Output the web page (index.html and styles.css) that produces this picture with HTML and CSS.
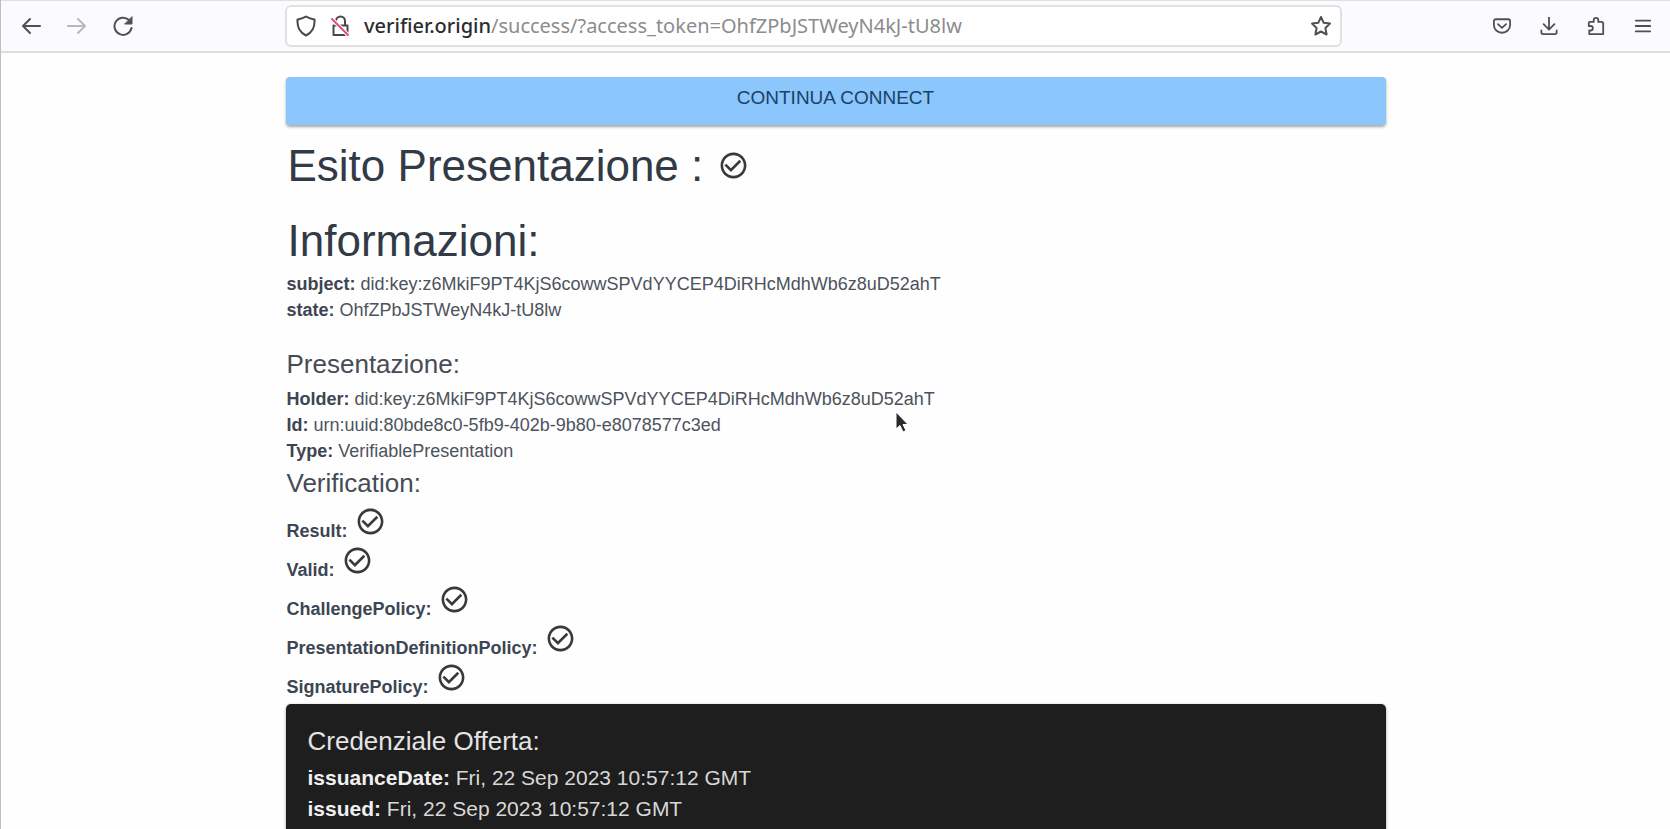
FILE: index.html
```html
<!DOCTYPE html>
<html lang="it">
<head>
<meta charset="utf-8">
<title>Esito Presentazione</title>
<link rel="stylesheet" href="styles.css">
</head>
<body>
<svg class="defs" aria-hidden="true">
  <symbol id="check" viewBox="0 0 24 24"><path fill="currentColor" d="M16.59 7.58 10 14.17l-3.59-3.58L5 12l5 5 8-8zM12 2C6.48 2 2 6.48 2 12s4.48 10 10 10 10-4.48 10-10S17.52 2 12 2zm0 18c-4.42 0-8-3.58-8-8s3.58-8 8-8 8 3.58 8 8-3.58 8-8 8z"/></symbol>
</svg>
<header class="toolbar">
  <nav class="nav">
    <button class="tool" aria-label="Indietro"><svg viewBox="0 0 20 20"><path d="M19 10H2M9 3 2 10l7 7"/></svg></button>
    <button class="tool faded" aria-label="Avanti"><svg viewBox="0 0 20 20"><path d="M1 10h17M11 3l7 7-7 7"/></svg></button>
    <button class="tool" aria-label="Ricarica"><svg viewBox="0 0 20 20"><path d="M18.500 12A8.600 8.600 0 1 1 16 4"/><path class="solid" d="M19 1v7h-7z"/></svg></button>
  </nav>
  <div class="urlbar">
    <svg class="mark" viewBox="0 0 20 22"><path d="M10 1.500C7 3.500 4 4 1.500 4.500 1 12 3.500 17.500 10 20.500 16.500 17.500 19 12 18.500 4.500 16 4 13 3.500 10 1.500z"/></svg>
    <svg class="mark" viewBox="0 0 20 22"><path d="M6 10V6a4.500 4.500 0 0 1 9 0v4M3.500 10.500h14v9.500h-14z"/><path class="halo" d="M3 5l15 15"/><path class="slash" d="M2 4l16 16"/></svg>
    <div class="url" role="textbox" aria-label="Indirizzo"><span class="host">verifier.origin</span>/success/?access_token=OhfZPbJSTWeyN4kJ-tU8lw</div>
    <button class="tool" aria-label="Aggiungi ai segnalibri"><svg class="star" viewBox="0 0 22 22"><path d="M11 2l2.700 5.800 6.300.800-4.600 4.400 1.200 6.500L11 16.500l-5.600 3 1.200-6.500L2 8.600l6.300-.800z"/></svg></button>
  </div>
  <div class="actions">
    <button class="tool" aria-label="Pocket"><svg viewBox="0 0 20 20"><path d="M3 2.500h14a2 2 0 0 1 2 2V9a9 8.500 0 0 1-18 0V4.500a2 2 0 0 1 2-2zM5.500 8l4.500 4 4.500-4"/></svg></button>
    <button class="tool" aria-label="Download"><svg viewBox="0 0 20 20"><path d="M10 0v13M4 8l6 6 6-6M1.500 15v2a2 2 0 0 0 2 2h13a2 2 0 0 0 2-2v-2"/></svg></button>
    <button class="tool" aria-label="Estensioni"><svg viewBox="0 0 20 20"><path d="M3 5.500h4.500V3.500a2.500 2.500 0 0 1 5 0v2H16a2 2 0 0 1 2 2V19H2.500v-4H4a2.500 2.500 0 0 0 0-5H2V7a1.500 1.500 0 0 1 1-1.500z"/></svg></button>
    <button class="tool" aria-label="Menu"><svg viewBox="0 0 20 20"><path d="M2 4h16M2 10h16M2 16h16"/></svg></button>
  </div>
</header>
<main class="page">
  <button class="connect">CONTINUA CONNECT</button>
  <h1 class="title">Esito Presentazione : <svg class="check"><use href="#check"/></svg></h1>
  <h1 class="title">Informazioni:</h1>
  <p class="line"><b>subject:</b> did:key:z6MkiF9PT4KjS6cowwSPVdYYCEP4DiRHcMdhWb6z8uD52ahT</p>
  <p class="line"><b>state:</b> OhfZPbJSTWeyN4kJ-tU8lw</p>
  <h2 class="subtitle spaced">Presentazione:</h2>
  <p class="line"><b>Holder:</b> did:key:z6MkiF9PT4KjS6cowwSPVdYYCEP4DiRHcMdhWb6z8uD52ahT</p>
  <p class="line"><b>Id:</b> urn:uuid:80bde8c0-5fb9-402b-9b80-e8078577c3ed</p>
  <p class="line"><b>Type:</b> VerifiablePresentation</p>
  <h2 class="subtitle">Verification:</h2>
  <div class="results">
    <p class="line result"><b>Result:</b> <svg class="check"><use href="#check"/></svg></p>
    <p class="line result"><b>Valid:</b> <svg class="check"><use href="#check"/></svg></p>
    <p class="line result"><b>ChallengePolicy:</b> <svg class="check"><use href="#check"/></svg></p>
    <p class="line result"><b>PresentationDefinitionPolicy:</b> <svg class="check"><use href="#check"/></svg></p>
    <p class="line result"><b>SignaturePolicy:</b> <svg class="check"><use href="#check"/></svg></p>
  </div>
  <section class="card">
    <h2 class="subtitle">Credenziale Offerta:</h2>
    <p class="detail"><b>issuanceDate:</b> Fri, 22 Sep 2023 10:57:12 GMT</p>
    <p class="detail"><b>issued:</b> Fri, 22 Sep 2023 10:57:12 GMT</p>
  </section>
</main>
<svg class="pointer" viewBox="0 0 14 22" aria-hidden="true"><path d="M1 1v17l4-3.500 3 6.500 3-1.500-3-6h5z"/></svg>
</body>
</html>
```

FILE: styles.css
```css
* { box-sizing: border-box; }
html { height: 100%; overflow: hidden; }
body {
  margin: 0;
  height: 100%;
  overflow: hidden;
  border-left: 1px solid #c4bcc0;
  background: #fefefe;
  color: #323a46;
  font-family: "Liberation Sans", Arial, sans-serif;
}
.defs { display: none; }

.toolbar {
  display: grid;
  grid-template-columns: 284px minmax(0, 1fr) 328px;
  align-items: center;
  height: 53px;
  background: #fbfafe;
  border-top: 1px solid #e2dfe3;
  border-bottom: 2px solid #e0dce1;
}
.nav { display: flex; gap: 26px; padding-left: 20px; }
.actions { display: flex; justify-content: flex-end; gap: 29px; padding-right: 18px; }
.tool {
  display: flex;
  padding: 0;
  border: 0;
  background: none;
  color: #505054;
}
.tool svg { width: 20px; height: 20px; }
.actions .tool svg { width: 18px; height: 18px; }
.tool svg, .mark {
  fill: none;
  stroke: currentColor;
  stroke-width: 2;
  stroke-linecap: round;
  stroke-linejoin: round;
}
.tool .star { width: 22px; height: 22px; }
.tool .solid { fill: currentColor; stroke-width: 1; }
.faded { color: #b9b8bd; }
.urlbar {
  display: flex;
  align-items: center;
  gap: 14px;
  height: 42px;
  padding: 0 8px 0 9px;
  border: 2px solid #e2dfe3;
  border-radius: 6px;
  background: #fff;
  color: #48484c;
}
.mark { flex: none; width: 20px; height: 22px; }
.mark .halo { stroke: #fff; stroke-width: 4; }
.mark .slash { stroke: #e0506e; }
.url {
  flex: 1;
  color: #8c8c8e;
  font: 20px/26px "Noto Sans", sans-serif;
  white-space: nowrap;
}
.host { color: #2c2c30; font-weight: 500; }

.page { max-width: 1100px; margin: 0 auto; padding-top: 24px; }
.connect {
  display: block;
  width: 100%;
  height: 48px;
  padding: 0 0 6px;
  border: 0;
  border-radius: 4px;
  background: #8bc6fc;
  box-shadow: 0 2px 3px rgba(0, 0, 0, .35);
  color: #1b4166;
  font: 19px/24px "Liberation Sans", Arial, sans-serif;
}
.title { margin: 0 0 20px; padding-left: 2px; font-size: 44px; font-weight: 400; line-height: 55px; }
.connect + .title { margin-top: 13px; }
.title + .line { margin-top: -17px; }
.check { width: 31px; height: 31px; margin-left: 2px; color: #38393d; }
.line { margin: 0; padding-left: 1px; font-size: 18px; line-height: 26px; color: #4d535d; }
.results { padding: 1px 0 3px; }
.result { line-height: 27px; }
.line b { color: #3d4552; }
.subtitle { margin: 0 0 3px; padding-left: 1px; font-size: 26px; font-weight: 400; line-height: 38px; color: #464c56; }
.spaced { margin-top: 22px; }
.card {
  padding: 18px 21px 24px;
  border-radius: 5px;
  background: #1e1e1e;
  box-shadow: 0 1px 3px rgba(0, 0, 0, .4);
}
.card .subtitle { margin-bottom: 2px; color: #e4e4e4; }
.detail { margin: 0; padding-left: 1px; color: #d8d8d8; font-size: 21px; line-height: 31px; }
.detail b { color: #f0f0f0; }
.pointer {
  position: absolute;
  left: 895px;
  top: 411px;
  width: 14px;
  height: 22px;
  fill: #2a2a2c;
  stroke: #fff;
  stroke-width: 1;
}
```
